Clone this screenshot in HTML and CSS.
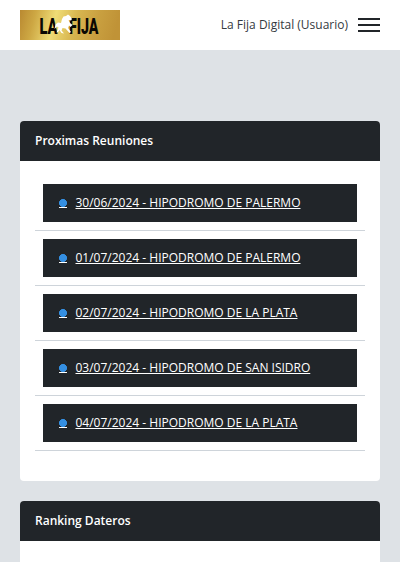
FILE: index.html
```html
<!DOCTYPE html>
<html lang="es">
<head>
<meta charset="utf-8">
<title>La Fija</title>
<link rel="stylesheet" href="styles.css">
</head>
<body>
<header class="topbar">
  <svg class="logo" viewBox="0 0 100 30" role="img" aria-label="La Fija">
    <defs>
      <linearGradient id="gold" x1="0" y1="0" x2="1" y2="0.08">
        <stop offset="0" stop-color="#b98931"/>
        <stop offset=".16" stop-color="#cda743"/>
        <stop offset=".37" stop-color="#efdc76"/>
        <stop offset=".58" stop-color="#d8b650"/>
        <stop offset=".8" stop-color="#c9a040"/>
        <stop offset="1" stop-color="#c09337"/>
      </linearGradient>
    </defs>
    <rect width="100" height="30" fill="url(#gold)"/>
    <text class="logo-text" x="19.5" y="23.5" textLength="18" lengthAdjust="spacingAndGlyphs">LA</text>
    <text class="logo-text" x="49" y="23.5" textLength="29.5" lengthAdjust="spacingAndGlyphs">FIJA</text>
    <path fill="#fff" d="M35.5 14.5L38 12.5L41 13L42 9L43.5 6.5L46 6L48 4.5L50 6L52 9L51 10.5L48.5 10L50 13L52.5 15L50.5 17L49 15.5L48 18L51 22L49.5 23L45.5 18.5L42.5 18L41.5 20.5L44 23.5L41.5 23L39.5 20L38 22L36.5 22.5L38.5 17.5L37 16.5L34.5 19Z"/>
  </svg>
  <div class="account">
    <span>La Fija Digital (Usuario)</span>
    <button class="menu" aria-label="Menu"><i></i><i></i><i></i></button>
  </div>
</header>
<main class="content">
  <section class="card">
    <h2 class="card-title">Proximas Reuniones</h2>
    <div class="card-body">
      <ul class="meetings">
        <li><a href="#"><span class="dot"></span><span>30/06/2024 - HIPODROMO DE PALERMO</span></a></li>
        <li><a href="#"><span class="dot"></span><span>01/07/2024 - HIPODROMO DE PALERMO</span></a></li>
        <li><a href="#"><span class="dot"></span><span>02/07/2024 - HIPODROMO DE LA PLATA</span></a></li>
        <li><a href="#"><span class="dot"></span><span>03/07/2024 - HIPODROMO DE SAN ISIDRO</span></a></li>
        <li><a href="#"><span class="dot"></span><span>04/07/2024 - HIPODROMO DE LA PLATA</span></a></li>
      </ul>
    </div>
  </section>
  <section class="card">
    <h2 class="card-title">Ranking Dateros</h2>
    <div class="card-body"></div>
  </section>
</main>
</body>
</html>
```
FILE: styles.css
```css
* {
  box-sizing: border-box;
}

body {
  margin: 0;
  background: #dee2e6;
  color: #212529;
  font: 12px/18px "Open Sans", sans-serif;
}

.topbar {
  display: flex;
  align-items: center;
  justify-content: space-between;
  height: 50px;
  padding: 0 20px;
  background: #fff;
}

.logo {
  display: block;
  width: 100px;
  height: 30px;
}

.logo-text {
  font: 900 22px Roboto, sans-serif;
  fill: #0b0903;
}

.account {
  display: flex;
  align-items: center;
  gap: 10px;
  color: #343a40;
}

.menu {
  display: flex;
  flex-direction: column;
  gap: 4px;
  width: 22px;
  padding: 0;
  border: 0;
  background: none;
}

.menu i {
  width: 22px;
  height: 2px;
  background: #212529;
}

.content {
  height: 512px;
  padding: 71px 20px 0;
  overflow: hidden;
}

.card {
  margin-bottom: 20px;
  border-radius: 4px;
  overflow: hidden;
  background: #fff;
}

.card-title {
  height: 40px;
  margin: 0;
  padding: 0 15px;
  background: #212529;
  color: #fff;
  font-size: 12px;
  font-weight: 600;
  line-height: 40px;
}

.card-body {
  min-height: 45px;
  padding: 15px 15px 30px;
}

.meetings {
  margin: 0;
  padding: 0;
  list-style: none;
}

.meetings li {
  padding: 8px;
  border-bottom: 1px solid #ced4da;
}

.meetings a {
  display: flex;
  align-items: center;
  gap: 8.5px;
  height: 38px;
  padding: 0 16px;
  background: #212529;
  color: #fff;
  text-decoration: underline;
}

.dot {
  width: 8px;
  height: 9px;
  margin-top: 1px;
  border-bottom: 1px solid #fff;
  background: radial-gradient(circle at 4px 4px, #348fe2 3.7px, transparent 4.3px);
}
```
